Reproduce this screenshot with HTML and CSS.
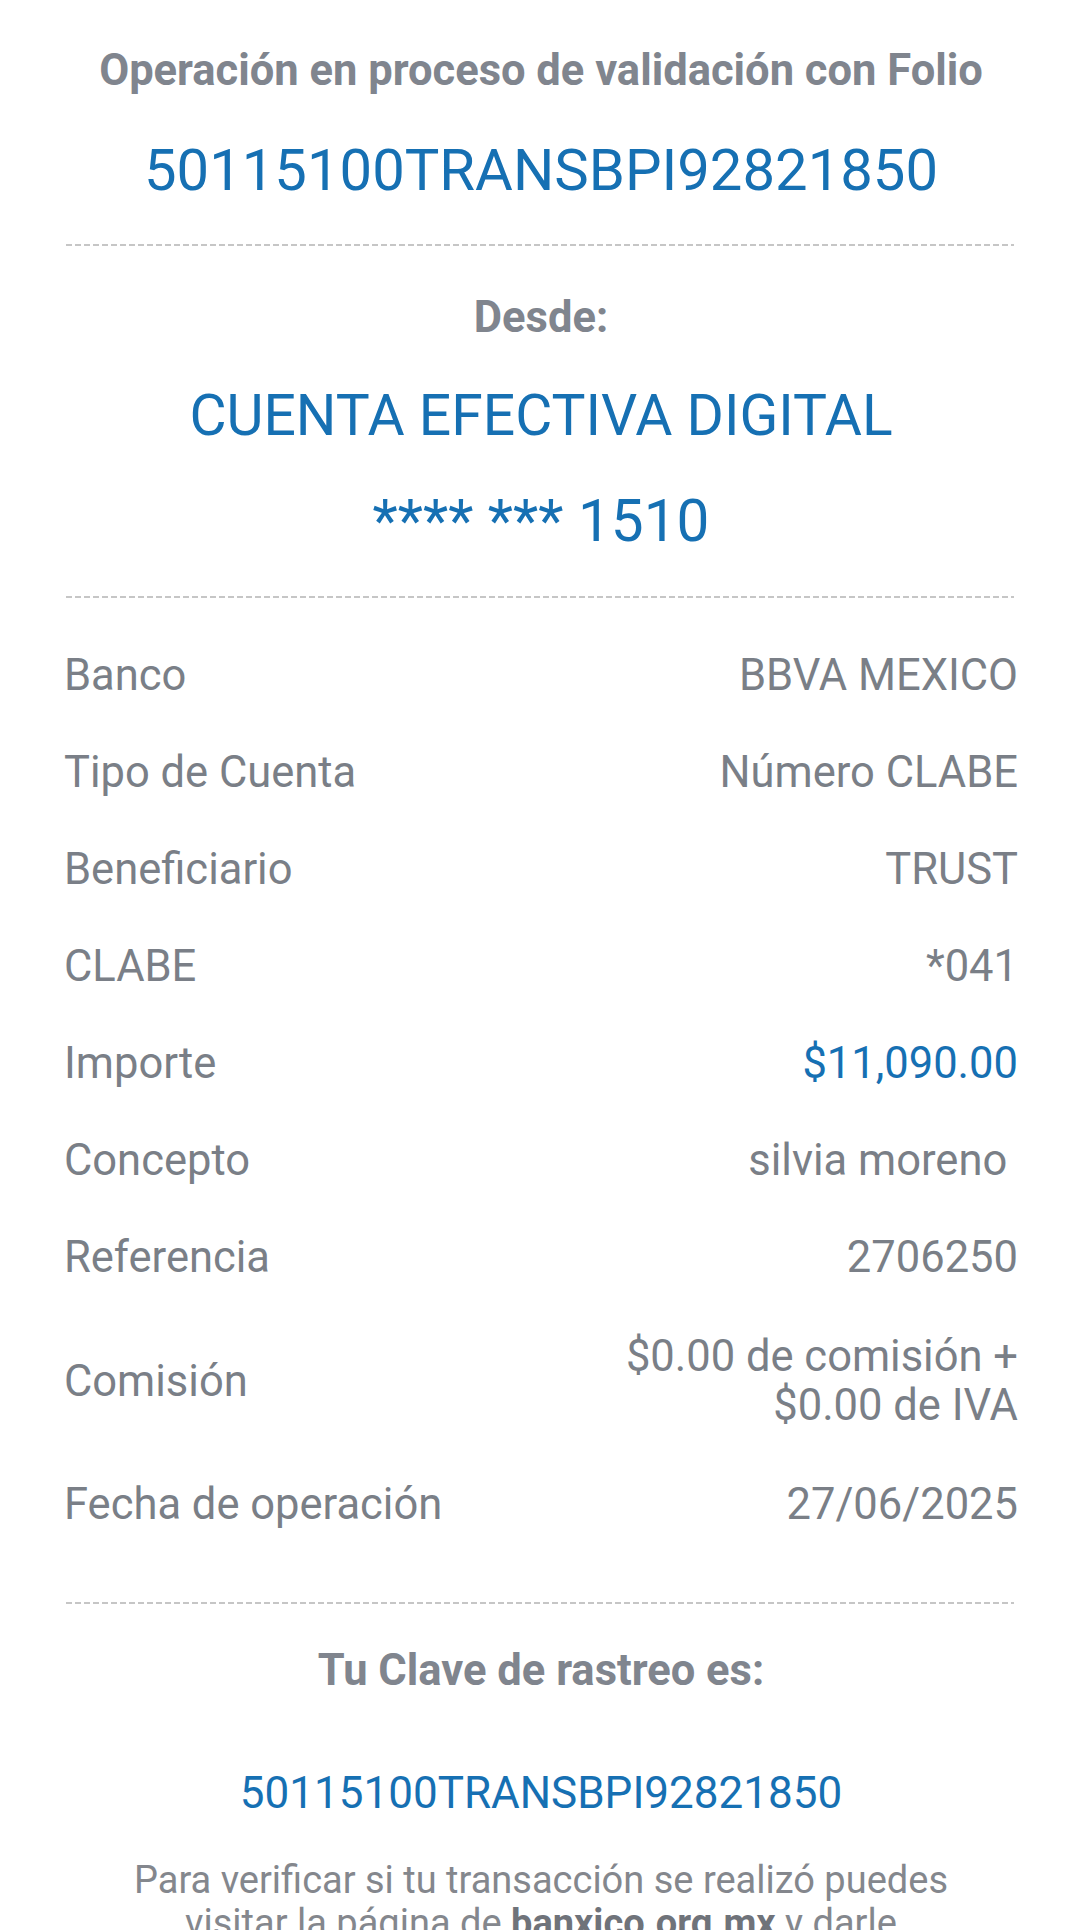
FILE: index.html
```html
<!DOCTYPE html>
<html>
<head>
    <title>Comprobante de operación</title>
    <link rel="stylesheet" href="styles.css">
</head>
<body>
    <div class="receipt">
        <div class="head">
            <p class="title">Operación en proceso de validación con Folio</p>
            <p class="folio">50115100TRANSBPI92821850</p>
        </div>
        <div class="divider"></div>

        <div class="origin">
            <p class="label-center">Desde:</p>
            <p class="account-name">CUENTA EFECTIVA DIGITAL</p>
            <p class="account-num">**** *** 1510</p>
        </div>
        <div class="divider"></div>

        <div class="details">
            <div class="row"><span class="key">Banco</span><span class="val">BBVA MEXICO</span></div>
            <div class="row"><span class="key">Tipo de Cuenta</span><span class="val">Número CLABE</span></div>
            <div class="row"><span class="key">Beneficiario</span><span class="val">TRUST</span></div>
            <div class="row"><span class="key">CLABE</span><span class="val">*041</span></div>
            <div class="row"><span class="key">Importe</span><span class="val amount">$11,090.00</span></div>
            <div class="row"><span class="key">Concepto</span><span class="val">silvia moreno&nbsp;</span></div>
            <div class="row"><span class="key">Referencia</span><span class="val">2706250</span></div>
            <div class="row row-tall"><span class="key">Comisión</span><span class="val">$0.00 de comisión +<br>$0.00 de IVA</span></div>
            <div class="row"><span class="key">Fecha de operación</span><span class="val">27/06/2025</span></div>
        </div>
        <div class="divider divider-low"></div>

        <div class="tracking">
            <p class="label-center">Tu Clave de rastreo es:</p>
            <p class="tracking-code">50115100TRANSBPI92821850</p>
            <p class="note">Para verificar si tu transacción se realizó puedes visitar la página de <b>banxico.org.mx</b> y darle seguimiento con tu clave de rastreo.</p>
        </div>
    </div>
</body>
</html>
```

FILE: styles.css
```css
html, body { margin: 0; padding: 0; background: #ffffff; }
body { font-family: Roboto, "Noto Sans", Arial, sans-serif; color: #7a7f87; height: 1930px; overflow: hidden; }
p { margin: 0; }

.receipt { padding: 0 51px 0 64px; }

.head { text-align: center; padding-top: 41px; }
.title { font-size: 43.5px; font-weight: bold; line-height: 60px; color: #80858e; white-space: nowrap; }
.folio { font-size: 58px; line-height: 80px; color: #1670b3; margin-top: 29px; }

.divider { height: 2px; margin: 34px 4px 0 2px;
    background: repeating-linear-gradient(to right, #c6c6c6 0 6px, transparent 6px 9px); }

.origin { text-align: center; padding-top: 42px; }
.label-center { font-size: 43.5px; font-weight: bold; line-height: 60px; color: #80858e; }
.account-name { font-size: 57px; line-height: 80px; color: #1670b3; margin-top: 28px; }
.account-num { font-size: 58.5px; line-height: 80px; color: #1670b3; margin-top: 25px; }
.origin + .divider { margin-top: 35px; }

.details { padding-top: 29px; }
.row { display: flex; justify-content: space-between; align-items: center; padding: 24px 0; font-size: 43.5px; line-height: 49px; }
.row-tall { padding: 26px 0; }
.key { color: #7a7f87; }
.val { text-align: right; color: #7a7f87; }
.amount { color: #1670b3; }
.divider-low { margin-top: 49px; }

.tracking { text-align: center; padding-top: 37px; }
.tracking-code { font-size: 44px; line-height: 60px; color: #1670b3; margin-top: 62px; }
.note { font-size: 38px; line-height: 43px; color: #84878d; margin: 36px 50px 0; }
.note b { color: #6f737a; }
```
